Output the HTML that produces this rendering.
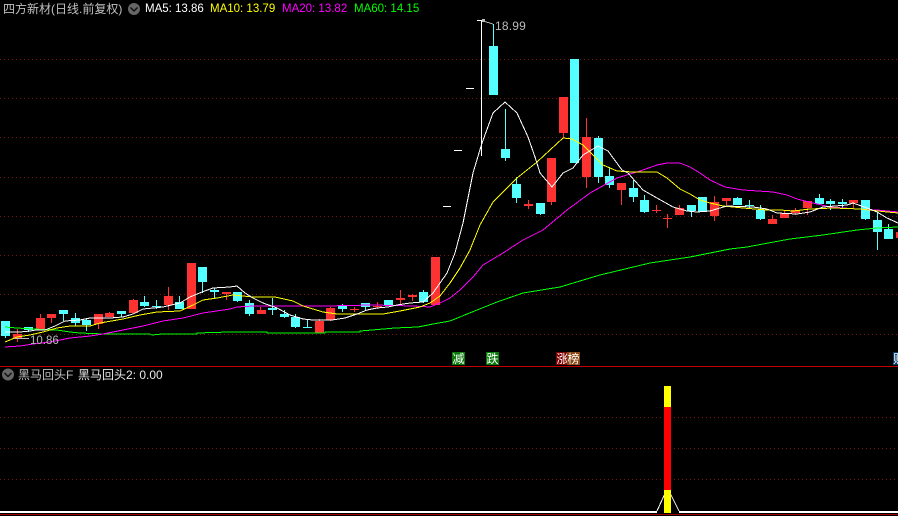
<!DOCTYPE html>
<html><head><meta charset="utf-8"><style>
html,body{margin:0;padding:0;background:#000;width:898px;height:516px;overflow:hidden}
#c{position:absolute;left:0;top:0;width:898px;height:516px;background:#000;overflow:hidden}
svg{position:absolute;left:0;top:0}
.t{position:absolute;white-space:nowrap;font:12px/14px "Liberation Sans","WenQuanYi Zen Hei",sans-serif}
.m{font-size:11.5px;letter-spacing:0}
.k{position:absolute;width:13px;height:13px;top:352px;color:#fff;font:12px/13px "WenQuanYi Zen Hei","Noto Sans CJK SC",sans-serif;text-align:center;overflow:hidden}
.z{font-family:"WenQuanYi Zen Hei","Noto Sans CJK SC",sans-serif;font-size:12px;letter-spacing:0}
</style></head><body><div id="c">
<svg width="898" height="516" viewBox="0 0 898 516" shape-rendering="crispEdges" fill="none">
<g stroke="#7a1414" stroke-dasharray="1 3">
<path d="M0 59.5H898M0 98.5H898M0 137.5H898M0 177.5H898M0 216.5H898M0 255.5H898M0 294.5H898M0 334.5H898"/>
<path d="M0 417.5H662M674 417.5H898M0 448.5H662M674 448.5H898M0 479.5H662M674 479.5H898"/>
</g>
<path stroke="#54ffff" d="M5.5 321V338M28.5 327V332M63.5 310V321M75.5 313V326M86.5 318V331M121.5 311V317M144.5 296V307M156.5 300V309M179.5 296V309M202.5 267V293M214.5 288V299M237.5 292V302M249.5 300V316M272.5 298V315M284.5 310V318M295.5 314V328M307.5 319V328M342.5 304V312M365.5 303V310M423.5 290V303M493.5 24V46M505.5 109V161M516.5 177V203M540.5 203V215M598.5 136V183M609.5 167V188M633.5 180V202M644.5 195V213M691.5 205V217M737.5 197V205M749.5 200V209M760.5 205V220M819.5 194V205M830.5 199V210M842.5 199V209M865.5 200V220M877.5 212V250M888.5 224V239"/>
<path stroke="#ff3232" d="M17.5 329V342M40.5 314V330M51.5 314V323M98.5 314V329M109.5 312V317M133.5 299V313M168.5 287V310M226.5 292V300M260.5 307V314M319.5 319V333M330.5 307V321M354.5 307V312M377.5 302V309M400.5 290V304M412.5 294V301M551.5 158V205M563.5 97V138M586.5 118V188M621.5 183V205M528.5 200V209M656.5 205V213M667.5 214V228M679.5 205V215M714.5 196V221M726.5 198V205M772.5 215V224M784.5 210V218M795.5 208V215M807.5 201V215M853.5 200V209"/>
<path fill="#54ffff" d="M1 321h9v15h-9zM24 327h9v3h-9zM59 310h9v4h-9zM71 318h9v5h-9zM82 320h9v5h-9zM117 311h9v3h-9zM140 302h9v4h-9zM152 306h9v1h-9zM175 302h9v7h-9zM198 267h9v15h-9zM210 290h9v2h-9zM233 292h9v9h-9zM245 303h9v11h-9zM268 308h9v2h-9zM280 314h9v3h-9zM291 317h9v10h-9zM303 327h9v1h-9zM338 306h9v3h-9zM361 303h9v4h-9zM384 300h9v5h-9zM419 292h9v10h-9zM489 46h9v49h-9zM501 149h9v9h-9zM512 184h9v14h-9zM536 203h9v11h-9zM570 59h9v104h-9zM594 138h9v39h-9zM605 176h9v9h-9zM629 188h9v9h-9zM640 200h9v12h-9zM687 205h9v6h-9zM698 197h9v15h-9zM733 198h9v7h-9zM745 205h9v1h-9zM756 210h9v9h-9zM815 198h9v6h-9zM826 201h9v3h-9zM838 202h9v2h-9zM861 200h9v19h-9zM873 220h9v12h-9zM884 229h9v10h-9z"/>
<path fill="#ff3232" d="M13 334h9v5h-9zM36 318h9v12h-9zM47 314h9v4h-9zM94 314h9v10h-9zM105 313h9v4h-9zM129 300h9v13h-9zM164 296h9v9h-9zM187 263h9v46h-9zM222 292h9v2h-9zM257 310h9v4h-9zM315 321h9v12h-9zM326 308h9v12h-9zM350 309h9v1h-9zM373 306h9v1h-9zM396 298h9v2h-9zM408 295h9v2h-9zM431 257h9v48h-9zM524 204h9v2h-9zM547 158h9v44h-9zM559 97h9v36h-9zM582 137h9v40h-9zM617 183h9v7h-9zM652 210h9v1h-9zM663 218h9v1h-9zM675 208h9v7h-9zM710 202h9v14h-9zM722 198h9v3h-9zM768 219h9v5h-9zM780 213h9v5h-9zM791 210h9v3h-9zM803 201h9v7h-9zM849 200h9v3h-9zM896 232h9v6h-9z"/>
<path stroke="#fff" d="M443 206.5h8M454 150.5h8M466 88.5h8M477 20.5h8M481.5 20V156"/>
<polyline stroke="#00ff00" points="5,327 17,328 33,329 57,330 70,332 80,333 103,334 150,334 152,335 162,334 197,334 197,333 230,332 267,332 267,333 325,333 325,332 360,332 360,331 372,330 395,328 418,327 433,324 450,321 477,310 497,302 523,293 560,287 600,275 650,263 690,257 710,253 730,249 747,247 763,244 790,239 823,235 857,230 877,228 898,227"/>
<polyline stroke="#ff00ff" points="5,347 20,346 33,344 50,342 70,338 90,336 103,334 123,330 143,326 163,321 183,318 203,313 230,309 237,307 253,306 290,306 325,306 373,305 413,306 430,307 440,303 450,298 460,290 473,277 483,265 503,253 523,240 543,230 567,210 590,193 617,178 640,171 657,165 667,163 680,163 690,167 700,173 710,180 725,187 743,190 773,192 787,195 797,199 813,203 830,207 857,209 877,210 898,212"/>
<polyline stroke="#ffff00" points="5,342 17,337 30,335 43,332 57,328 70,326 90,326 100,323 123,319 140,315 157,312 180,311 193,305 203,300 217,298 233,295 253,297 275,297 293,301 303,306 323,312 337,314 360,314 383,314 400,311 420,307 430,303 440,296 450,283 460,268 470,250 480,225 493,202 517,178 537,162 563,138 572,139 583,145 593,155 603,165 617,171 633,172 657,172 667,178 680,189 690,194 700,200 710,203 723,206 743,208 767,210 780,210 793,211 810,209 833,208 860,209 887,212 898,213"/>
<polyline stroke="#fff" points="5,332 20,332 30,331 36,330 45,330 55,326 65,321 80,320 90,318 110,318 123,317 133,314 143,309 163,307 180,303 190,297 202,292 213,288 230,287 237,286 245,293 253,298 263,303 277,308 290,315 303,319 313,320 332,320 345,318 357,314 367,310 377,308 388,307 397,305 410,303 423,302 433,293 440,283 447,273 455,253 463,223 473,173 482,143 493,113 505,102 517,113 528,137 535,157 540,173 552,187 563,173 573,168 583,155 598,146 608,151 622,170 628,173 643,190 657,198 673,207 687,211 697,212 710,211 720,208 727,206 753,207 767,209 777,213 797,214 810,212 823,207 847,205 853,203 867,208 877,212 887,218 898,223"/>
<path stroke="#bbb" d="M483 21L493 24M15 338.5H29"/>
<rect x="482" y="19" width="3" height="3" fill="#bbb"/>
<path stroke="#c00000" d="M0 366.5H898"/>
<path stroke="#fff" stroke-width="2" d="M0 512H657M679 512H898"/>
<path stroke="#fff" d="M657 511L667.5 488L679 511"/>
<path stroke="#a00000" d="M0 514.5H898"/>
<rect x="664" y="386" width="7" height="21" fill="#ffff00"/>
<rect x="664" y="407" width="7" height="83" fill="#ff0000"/>
<rect x="664" y="490" width="7" height="23" fill="#ffff00"/>
<g shape-rendering="auto">
<circle cx="134" cy="9" r="6" fill="#666"/>
<path stroke="#111" stroke-width="1.5" d="M130.5 7.5L134 11L137.5 7.5"/>
<circle cx="8" cy="374.5" r="6" fill="#666"/>
<path stroke="#111" stroke-width="1.5" d="M4.5 373L8 376.5L11.5 373"/>
</g>
</svg>
<div class="t" style="left:3px;top:2px;color:#c0c0c0"><span class="z">四方新材</span>(<span class="z">日线</span>.<span class="z">前复权</span>)</div>
<div class="t m" style="left:145px;top:2px;color:#fff">MA5: 13.86</div>
<div class="t m" style="left:210px;top:2px;color:#ffff00">MA10: 13.79</div>
<div class="t m" style="left:282px;top:2px;color:#ff00ff">MA20: 13.82</div>
<div class="t m" style="left:354px;top:2px;color:#00ff00">MA60: 14.15</div>
<div class="t" style="left:495px;top:19px;color:#bbb;letter-spacing:.2px">18.99</div>
<div class="t m" style="left:30px;top:334px;color:#bbb">10.86</div>
<div class="t" style="left:18px;top:368px;color:#c0c0c0"><span class="z">黑马回头</span>F</div>
<div class="t" style="left:78px;top:368px;color:#e8e8e8"><span class="z">黑马回头</span>2: 0.00</div>
<div class="k" style="left:452px;background:#0a7a0a">减</div>
<div class="k" style="left:486px;background:#0a7a0a">跌</div>
<div class="k" style="left:556px;background:#800000">涨</div>
<div class="k" style="left:567px;background:#8b4513">榜</div>
<div class="k" style="left:893px;background:#003a70;text-align:left">财</div>
</div></body></html>
